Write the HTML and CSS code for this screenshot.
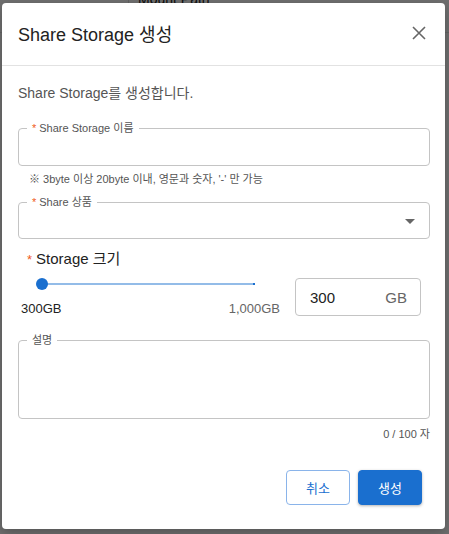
FILE: index.html
```html
<!DOCTYPE html>
<html lang="ko">
<head>
<meta charset="utf-8">
<link rel="stylesheet" href="styles.css">
</head>
<body>
<div class="backdrop-page">
  <div class="bg-vline"></div>
  <div class="bg-text">Mount Path</div>
  <div class="bg-hline"></div>
</div>
<div class="overlay"></div>
<div class="modal">
  <div class="modal-header">
    <h1 class="modal-title">Share Storage 생성</h1>
    <svg class="close-icon" width="14" height="14" viewBox="0 0 14 14"><path d="M1 1L13 13M13 1L1 13" stroke="#666" stroke-width="1.6" fill="none"/></svg>
  </div>
  <div class="modal-body">
    <p class="intro">Share Storage를 생성합니다.</p>

    <div class="field field-name">
      <span class="field-label"><span class="req">*</span>Share Storage 이름</span>
    </div>
    <p class="helper">※ 3byte 이상 20byte 이내, 영문과 숫자, '-' 만 가능</p>

    <div class="field field-select">
      <span class="field-label"><span class="req">*</span>Share 상품</span>
      <span class="caret"></span>
    </div>

    <div class="size-label"><span class="req big">*</span>Storage 크기</div>
    <div class="size-row">
      <div class="slider">
        <div class="slider-track">
          <span class="track-line"></span>
          <span class="track-end"></span>
          <span class="thumb"></span>
        </div>
        <div class="slider-labels">
          <span class="min">300GB</span>
          <span class="max">1,000GB</span>
        </div>
      </div>
      <div class="size-input">
        <span class="value">300</span>
        <span class="unit">GB</span>
      </div>
    </div>

    <div class="field field-desc">
      <span class="field-label plain">설명</span>
    </div>
    <p class="counter">0 / 100 자</p>
  </div>
  <div class="modal-footer">
    <button class="btn btn-outline">취소</button>
    <button class="btn btn-primary">생성</button>
  </div>
</div>
</body>
</html>
```

FILE: styles.css
```css
* { box-sizing: border-box; }
html, body {
  margin: 0;
  padding: 0;
  width: 449px;
  height: 534px;
  overflow: hidden;
}
body {
  background: #fff;
  font-family: "Liberation Sans", "Noto Sans CJK KR", sans-serif;
  position: relative;
}
.backdrop-page { position: absolute; inset: 0; }
.bg-vline { position: absolute; left: 128px; top: 0; width: 1px; height: 40px; background: #ddd; }
.bg-text { position: absolute; left: 138px; top: -9px; font-size: 14px; line-height: 16px; color: #222; }
.bg-hline { position: absolute; left: 0; right: 0; top: 32px; height: 1px; background: #e6e6e6; }
.overlay { position: absolute; inset: 0; background: rgba(0, 0, 0, 0.565); }

.modal {
  position: absolute;
  left: 2px;
  top: 3px;
  width: 443px;
  height: 526px;
  background: #fff;
  border-radius: 4px;
  display: flex;
  flex-direction: column;
  box-shadow: 0 4px 12px rgba(0,0,0,0.25);
}
.modal-header {
  height: 63px;
  border-bottom: 1px solid #e2e2e2;
  display: flex;
  align-items: center;
  justify-content: space-between;
  padding: 0 19px 0 16px;
}
.modal-title {
  margin: 0;
  font-size: 18px;
  font-weight: 400;
  color: #222;
  line-height: 24px;
  padding-top: 1px;
}
.close-icon { display: block; margin-top: -3px; }

.modal-body {
  flex: 1;
  padding: 17px 15px 0 16px;
  display: flex;
  flex-direction: column;
}
.intro {
  margin: 0;
  font-size: 14px;
  line-height: 20px;
  color: #555;
}
.field {
  position: relative;
  border: 1px solid #c4c4c4;
  border-radius: 4px;
  height: 38px;
}
.field-label {
  position: absolute;
  top: -7px;
  left: 8px;
  padding: 0 5px;
  background: #fff;
  font-size: 11px;
  line-height: 13px;
  color: #555;
}
.req {
  color: #f05a22;
  margin-right: 3px;
  font-size: 11px;
}
.req.big { font-size: 13px; margin-right: 4px; }
.field-name { margin-top: 25px; }
.helper {
  margin: 6px 0 0;
  padding-left: 11px;
  font-size: 11px;
  line-height: 14px;
  color: #555;
}
.field-select { margin-top: 16px; height: 37px; }
.caret {
  position: absolute;
  right: 14px;
  top: 16px;
  width: 0;
  height: 0;
  border-left: 5px solid transparent;
  border-right: 5px solid transparent;
  border-top: 5px solid #666;
}
.size-label {
  margin-top: 10px;
  padding-left: 9px;
  font-size: 15px;
  line-height: 20px;
  color: #222;
}
.size-row {
  margin-top: 7px;
  display: flex;
  align-items: flex-start;
  gap: 15px;
}
.slider { width: 262px; }
.slider-track {
  position: relative;
  height: 14px;
  margin: 0 25px 0 24px;
}
.track-line {
  position: absolute;
  left: 0; right: 0; top: 6px;
  height: 2px;
  background: #93bce8;
}
.track-end {
  position: absolute;
  right: 0; top: 6px;
  width: 2px; height: 2px;
  background: #1a6fcf;
}
.thumb {
  position: absolute;
  left: -6px; top: 1px;
  width: 12px; height: 12px;
  border-radius: 50%;
  background: #1a6fcf;
}
.slider-labels {
  margin-top: 10px;
  display: flex;
  justify-content: space-between;
  font-size: 13px;
  line-height: 16px;
  padding-left: 3px;
}
.slider-labels .min { color: #222; }
.slider-labels .max { color: #666; }
.size-input {
  width: 126px;
  height: 38px;
  margin-top: 1px;
  border: 1px solid #c4c4c4;
  border-radius: 4px;
  display: flex;
  align-items: center;
  justify-content: space-between;
  padding: 0 13px 0 14px;
  font-size: 15px;
}
.size-input .value { color: #222; }
.size-input .unit { color: #666; }
.field-desc { margin-top: 23px; height: 79px; }
.field-label.plain { padding: 0 5px; left: 8px; }
.counter {
  margin: 8px 0 0;
  text-align: right;
  font-size: 11px;
  line-height: 14px;
  color: #555;
}
.modal-footer {
  display: flex;
  justify-content: flex-end;
  gap: 8px;
  padding: 0 23px 24px 0;
}
.btn {
  width: 64px;
  height: 35px;
  border-radius: 4px;
  font-family: inherit;
  font-size: 13px;
  cursor: pointer;
}
.btn-outline {
  background: #fff;
  border: 1px solid #8ab4ea;
  color: #1a6fcf;
}
.btn-primary {
  background: #1a6fcf;
  border: 1px solid #1a6fcf;
  color: #fff;
  box-shadow: 0 1px 3px rgba(0,0,0,0.3);
}
```
